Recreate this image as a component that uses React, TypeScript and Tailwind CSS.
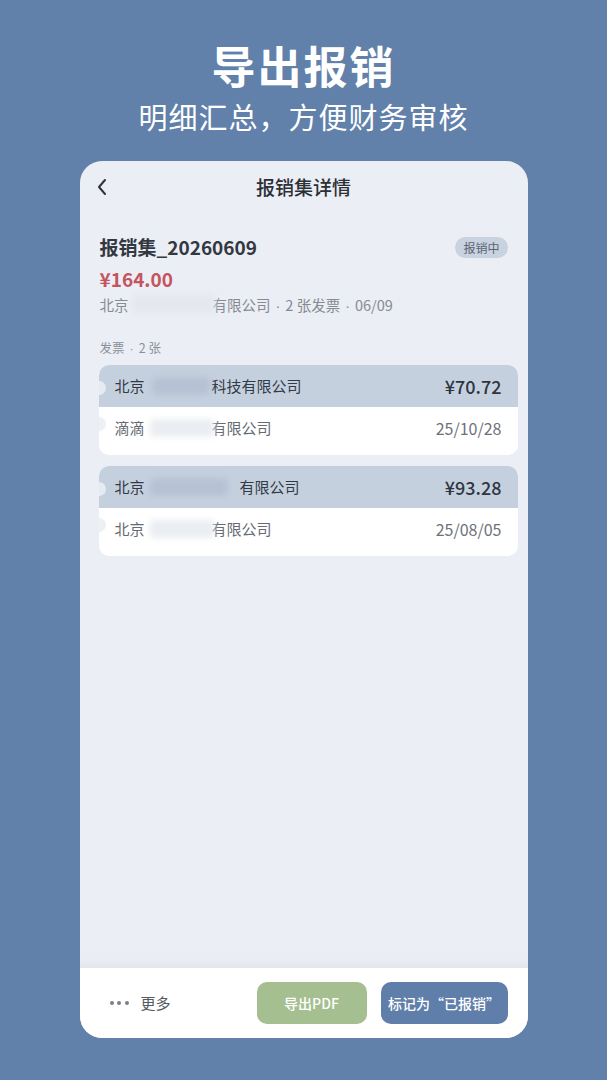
import React from "react";

const font = { fontFamily: '"Noto Sans CJK SC", "Noto Sans", sans-serif' };

type Invoice = {
  seller: React.ReactNode;
  buyer: React.ReactNode;
  amount: string;
  date: string;
};

// 打码区域：占位空白 + 模糊色块
const Masked = ({ gap, left, width, color }: { gap: string; left: string; width: string; color: string }) => (
  <>
    <span className={`inline-block ${gap}`} />
    <span className="relative">
      <span className={`absolute ${left} top-[2px] h-[18px] ${width} rounded ${color} blur-[3px]`} />
    </span>
  </>
);

// 细间隔点
const Dot = () => <span className="font-['Liberation_Sans'] px-[5px] leading-none">·</span>;

const invoices: Invoice[] = [
  {
    seller: (
      <>
        北京
        <Masked gap="w-[67px]" left="-left-[60px]" width="w-[58px]" color="bg-[#b6c2d3]" />
        科技有限公司
      </>
    ),
    buyer: (
      <>
        滴滴
        <Masked gap="w-[67px]" left="-left-[62px]" width="w-[64px]" color="bg-[#eaedf1]" />
        有限公司
      </>
    ),
    amount: "¥70.72",
    date: "25/10/28",
  },
  {
    seller: (
      <>
        北京
        <Masked gap="w-[95px]" left="-left-[90px]" width="w-[78px]" color="bg-[#b6c2d3]" />
        有限公司
      </>
    ),
    buyer: (
      <>
        北京
        <Masked gap="w-[67px]" left="-left-[62px]" width="w-[64px]" color="bg-[#eaedf1]" />
        有限公司
      </>
    ),
    amount: "¥93.28",
    date: "25/08/05",
  },
];

const InvoiceCard = ({ inv }: { inv: Invoice }) => (
  <div className="relative ml-[19px] mr-[10px] overflow-hidden rounded-[10px] bg-white">
    <div className="flex h-[42px] items-center justify-between bg-[#c5d0df] px-[16px]">
      <span className="text-[15px] text-[#333a44]">{inv.seller}</span>
      <span className="text-[18px] font-medium text-[#2e3540]">{inv.amount}</span>
    </div>
    <div className="flex h-[48px] items-center justify-between pb-[6px] px-[16px]">
      <span className="text-[15px] text-[#666b72]">{inv.buyer}</span>
      <span className="text-[16px] text-[#6d7279]">{inv.date}</span>
    </div>
    <span className="absolute -left-[7px] top-[16px] h-[14px] w-[14px] rounded-full bg-[#e6ebf2]" />
    <span className="absolute -left-[7px] top-[52px] h-[14px] w-[14px] rounded-full bg-[#eef0f4]" />
  </div>
);

export default function App() {
  return (
    <div className="flex h-[1080px] w-full flex-col items-center bg-[#6181ab]" style={font}>
      <h1 className="mt-[38px] text-[44px] font-bold leading-[54px] tracking-[2px] text-white">导出报销</h1>
      <p className="mt-[4px] text-[29px] leading-[40px] tracking-[1px] text-white">明细汇总，方便财务审核</p>

      <div className="mt-[25px] flex h-[877px] w-[448px] flex-col overflow-hidden rounded-[22px] bg-[#ebeef5]">
        {/* 顶部导航 */}
        <div className="relative flex h-[52px] items-center justify-center">
          <svg className="absolute left-[16px] top-[17px]" width="12" height="18" viewBox="0 0 12 18" fill="none">
            <path d="M9 2 L3 9 L9 16" stroke="#333" strokeWidth="2" strokeLinecap="round" strokeLinejoin="round" />
          </svg>
          <span className="text-[19px] font-medium text-[#2b2f36]">报销集详情</span>
        </div>

        {/* 报销集信息 */}
        <div className="px-[20px] pt-[20px]">
          <div className="flex items-center justify-between">
            <span className="text-[19px] font-bold leading-[28px] text-[#333840]">报销集_20260609</span>
            <span className="rounded-full bg-[#c8d2e0] px-[8px] text-[12px] leading-[21px] text-[#5b6470]">报销中</span>
          </div>
          <div className="mt-[5px] text-[19px] font-bold leading-[26px] text-[#c4545f]">¥164.00</div>
          <div className="mt-[2px] h-[22px] text-[14.5px] leading-[22px] text-[#868b92]">
            北京
            <span className="inline-block w-[84px]" />
            <span className="relative">
              <span className="absolute -left-[80px] top-[1px] h-[18px] w-[82px] rounded bg-[#e4e7ec] blur-[3px]" />
            </span>
            有限公司
            <Dot />2 张发票
            <Dot />06/09
          </div>
          <div className="mt-[23px] h-[18px] text-[12.5px] leading-[18px] text-[#8a8f96]">
            发票<Dot />2 张
          </div>
        </div>

        {/* 发票列表 */}
        <div className="mt-[8px] flex flex-col gap-[11px]">
          {invoices.map((inv, i) => (
            <InvoiceCard key={i} inv={inv} />
          ))}
        </div>

        <div className="flex-1" />

        {/* 底部操作栏 */}
        <div className="h-[10px] bg-gradient-to-b from-[#ebeef5] to-[#e3e6ec]" />
        <div className="flex h-[70px] items-center bg-white pl-[30px] pr-[20px]">
          <span className="flex items-center gap-[3.5px]">
            <span className="h-[4px] w-[4px] rounded-full bg-[#7b8088]" />
            <span className="h-[4px] w-[4px] rounded-full bg-[#7b8088]" />
            <span className="h-[4px] w-[4px] rounded-full bg-[#7b8088]" />
          </span>
          <span className="ml-[12px] text-[15px] text-[#555a62]">更多</span>
          <div className="flex-1" />
          <button className="h-[42px] w-[110px] rounded-[10px] bg-[#a5bf90] text-[14px] font-medium text-white">导出PDF</button>
          <button className="ml-[14px] h-[42px] w-[127px] rounded-[10px] bg-[#5f7faa] text-[14px] font-medium text-white">
            标记为“已报销”
          </button>
        </div>
      </div>
    </div>
  );
}
